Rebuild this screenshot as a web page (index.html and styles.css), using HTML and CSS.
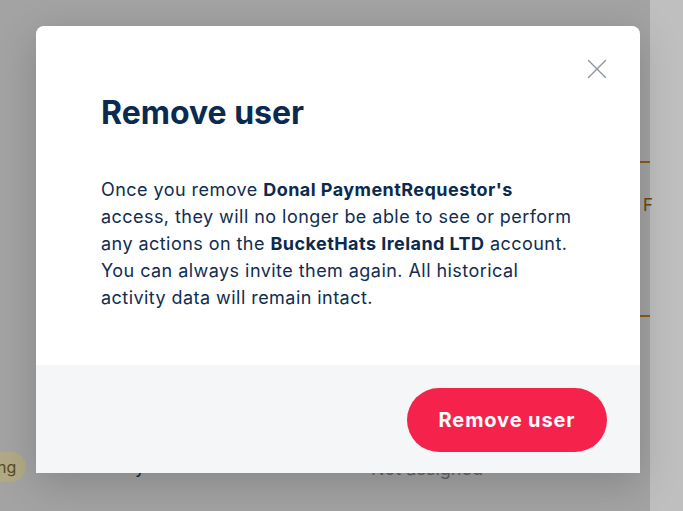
FILE: index.html
```html
<!DOCTYPE html>
<html lang="en">
<head>
<meta charset="utf-8">
<title>Remove user</title>
<link rel="stylesheet" href="styles.css">
</head>
<body>
<div class="page">
  <div class="backdrop">
    <div class="behind-rule rule-top"></div>
    <div class="behind-letter">F</div>
    <div class="behind-rule rule-bottom"></div>
    <div class="behind-badge">ng</div>
    <div class="behind-text">Not assigned</div>
    <div class="behind-y">y</div>
  </div>
  <div class="strip"></div>
  <div class="modal" role="dialog" aria-labelledby="modal-title">
    <button class="close" aria-label="Close">
      <svg width="20" height="20" viewBox="0 0 20 20" fill="none" stroke="#8a95a2" stroke-width="1.4" stroke-linecap="round">
        <path d="M1.5 1.5 L18.5 18.5 M18.5 1.5 L1.5 18.5"/>
      </svg>
    </button>
    <div class="modal-body">
      <h1 id="modal-title" class="title">Remove user</h1>
      <p class="desc">Once you remove <strong>Donal PaymentRequestor's</strong> access, they will no longer be able to see or perform any actions on the <strong>BucketHats Ireland LTD</strong> account. You can always invite them again. All historical activity data will remain intact.</p>
    </div>
    <div class="modal-footer">
      <button class="danger-btn">Remove user</button>
    </div>
  </div>
</div>
</body>
</html>
```

FILE: styles.css
```css
html, body {
  margin: 0;
  padding: 0;
}
body {
  width: 683px;
  height: 511px;
  overflow: hidden;
  font-family: Inter, "Noto Sans", sans-serif;
}
.page {
  position: relative;
  width: 683px;
  height: 511px;
  display: flex;
  background: #a3a3a3;
}
.backdrop {
  position: relative;
  width: 650px;
  height: 511px;
  background: #a3a3a3;
}
.strip {
  flex: 1;
  background: #bfbfbf;
}
.behind-rule {
  position: absolute;
  left: 640px;
  width: 10px;
  height: 2px;
  background: #8a5a1e;
}
.rule-top { top: 161px; }
.rule-bottom { top: 315px; }
.behind-letter {
  position: absolute;
  left: 643px;
  top: 195px;
  font-size: 17px;
  color: #6b4614;
}
.behind-badge {
  position: absolute;
  left: -17px;
  top: 452px;
  height: 30px;
  padding: 0 10px 0 14px;
  border-radius: 15px;
  background: #b2aa86;
  color: #5a4820;
  font-size: 16px;
  line-height: 30px;
  box-sizing: border-box;
}
.behind-text {
  position: absolute;
  left: 371px;
  top: 458px;
  font-size: 18px;
  color: #5f6165;
}
.behind-y {
  position: absolute;
  left: 135px;
  top: 456px;
  font-size: 18px;
  color: #0c2a4c;
}
.modal {
  position: absolute;
  left: 36px;
  top: 26px;
  width: 604px;
  height: 447px;
  background: #ffffff;
  border-radius: 8px 8px 0 0;
  box-shadow: 0 10px 40px rgba(0, 0, 0, 0.18);
  display: flex;
  flex-direction: column;
  overflow: hidden;
}
.close {
  position: absolute;
  top: 32px;
  right: 32px;
  width: 22px;
  height: 22px;
  padding: 0;
  border: 0;
  background: transparent;
  display: flex;
  align-items: center;
  justify-content: center;
}
.modal-body {
  flex: 1;
  padding: 67px 65px 0 65px;
}
.title {
  margin: 0;
  font-size: 32px;
  line-height: 40px;
  font-weight: 700;
  color: #0b2a4f;
}
.desc {
  margin: 43px 0 0 0;
  font-size: 18px;
  line-height: 27px;
  letter-spacing: 0.45px;
  color: #0f2d4f;
}
.desc strong {
  font-weight: 700;
  color: #0b2a4f;
}
.modal-footer {
  height: 108px;
  background: #f5f6f8;
  display: flex;
  align-items: center;
  justify-content: flex-end;
  padding: 2px 33px 0 0;
  box-sizing: border-box;
}
.danger-btn {
  width: 200px;
  height: 64px;
  border: 0;
  border-radius: 32px;
  background: #f5234b;
  color: #ffffff;
  font-family: Inter, "Noto Sans", sans-serif;
  font-size: 20px;
  font-weight: 700;
  letter-spacing: 0.9px;
}
```
